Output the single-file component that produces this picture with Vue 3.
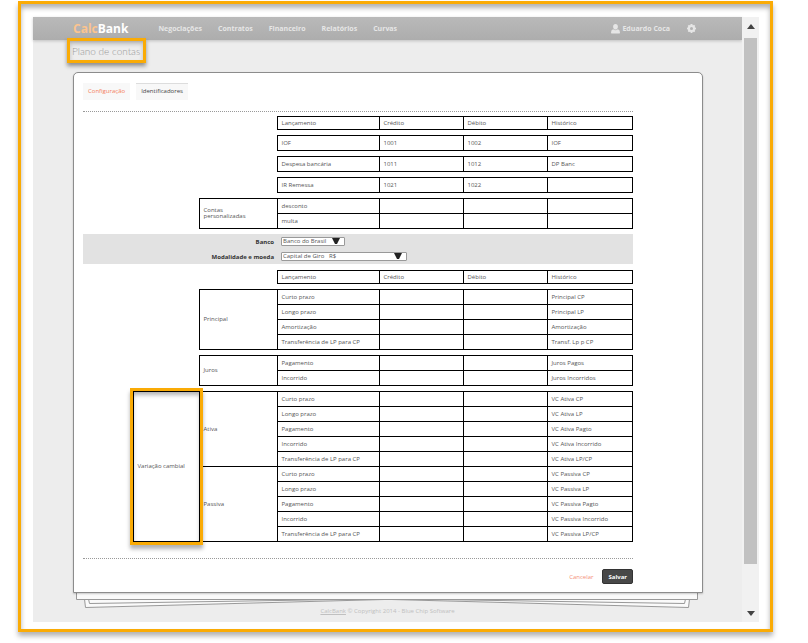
<script setup>
import { ref } from "vue";

const menu = ["Negociações", "Contratos", "Financeiro", "Relatórios", "Curvas"];

const header = {
  head: true,
  groups: [{ rows: [["Lançamento", "Crédito", "Débito", "Histórico"]] }],
};

const single = (...cells) => ({ groups: [{ rows: [cells] }] });

// lançamentos gerais
const generalBlocks = [
  header,
  single("IOF", "1001", "1002", "IOF"),
  single("Despesa bancária", "1011", "1012", "DP Banc"),
  single("IR Remessa", "1021", "1022", ""),
  {
    groups: [
      {
        name: "Contas personalizadas",
        rows: [
          ["desconto", "", "", ""],
          ["multa", "", "", ""],
        ],
      },
    ],
  },
];

// lançamentos por banco e modalidade
const bankBlocks = [
  header,
  {
    groups: [
      {
        name: "Principal",
        rows: [
          ["Curto prazo", "", "", "Principal CP"],
          ["Longo prazo", "", "", "Principal LP"],
          ["Amortização", "", "", "Amortização"],
          ["Transferência de LP para CP", "", "", "Transf. Lp p CP"],
        ],
      },
    ],
  },
  {
    groups: [
      {
        name: "Juros",
        rows: [
          ["Pagamento", "", "", "Juros Pagos"],
          ["Incorrido", "", "", "Juros Incorridos"],
        ],
      },
    ],
  },
  {
    outer: "Variação cambial",
    groups: ["Ativa", "Passiva"].map((name) => ({
      name,
      rows: [
        ["Curto prazo", "", "", `VC ${name} CP`],
        ["Longo prazo", "", "", `VC ${name} LP`],
        ["Pagamento", "", "", `VC ${name} Pagto`],
        ["Incorrido", "", "", `VC ${name} Incorrido`],
        ["Transferência de LP para CP", "", "", `VC ${name} LP/CP`],
      ],
    })),
  },
];

const sections = [
  { id: "geral", blocks: generalBlocks },
  { id: "banco", blocks: bankBlocks },
];

const banco = ref("Banco do Brasil");
const modalidade = ref("giro");

const countRows = (block) => block.groups.reduce((sum, g) => sum + g.rows.length, 0);
</script>

<template>
  <div class="frame">
    <div class="window">
      <div class="page">
        <header class="topbar">
          <a href="#" class="logo"><span>Calc</span>Bank</a>
          <nav class="menu">
            <a v-for="item in menu" :key="item" href="#">{{ item }}</a>
          </nav>
          <a href="#" class="user">
            <svg width="9" height="10" viewBox="0 0 9 10">
              <path d="M4.5 0C6 0 6.9 1.1 6.9 2.7C6.9 4.3 5.8 5.6 4.5 5.6C3.2 5.6 2.1 4.3 2.1 2.7C2.1 1.1 3 0 4.5 0ZM2.2 5.3Q4.5 7.4 6.8 5.3Q9 5.8 9 8.4Q9 9.6 7.8 9.6H1.2Q0 9.6 0 8.4Q0 5.8 2.2 5.3Z" />
            </svg>
            Eduardo Coca
          </a>
          <a href="#" class="settings" aria-label="Configurações">
            <svg width="9" height="9" viewBox="0 0 9 9">
              <g>
                <rect v-for="n in 4" :key="n" x="3.5" y="0" width="2" height="9" rx="0.4" :transform="`rotate(${n * 45} 4.5 4.5)`" />
              </g>
              <circle cx="4.5" cy="4.5" r="2.7" fill="none" stroke="#e6e6e6" stroke-width="1.8" />
              <circle cx="4.5" cy="4.5" r="1.5" class="hole" />
            </svg>
          </a>
        </header>

        <h1 class="title">Plano de contas</h1>

        <main class="sheet">
          <nav class="tabs">
            <a href="#">Configuração</a>
            <a href="#" class="active">Identificadores</a>
          </nav>

          <div class="accounts">
            <template v-for="section in sections" :key="section.id">
              <div v-if="section.id === 'banco'" class="filters">
                <div class="filter">
                  <label for="banco">Banco</label>
                  <div class="select short">
                    <select id="banco" v-model="banco">
                      <option>Banco do Brasil</option>
                    </select>
                    <svg width="8" height="7" viewBox="0 0 8 7"><path d="M0 0H8L5 6H3Z" /></svg>
                  </div>
                </div>
                <div class="filter">
                  <label for="modalidade">Modalidade e moeda</label>
                  <div class="select">
                    <select id="modalidade" v-model="modalidade">
                      <option value="giro">Capital de Giro &nbsp; R$</option>
                    </select>
                    <svg width="8" height="7" viewBox="0 0 8 7"><path d="M0 0H8L5 6H3Z" /></svg>
                  </div>
                </div>
              </div>

              <table v-for="(block, b) in section.blocks" :key="b" :class="{ head: block.head }">
                <colgroup>
                  <col class="c-space" />
                  <col class="c-outer" />
                  <col class="c-group" />
                  <col class="c-entry" />
                  <col class="c-value" />
                  <col class="c-value" />
                  <col />
                </colgroup>
                <tbody>
                  <template v-for="(group, g) in block.groups" :key="g">
                    <tr v-for="(row, r) in group.rows" :key="r">
                      <template v-if="g === 0 && r === 0">
                        <td class="blank" :rowspan="countRows(block)"></td>
                        <td :class="block.outer ? 'marked' : 'blank'" :rowspan="countRows(block)">
                          {{ block.outer }}
                        </td>
                      </template>
                      <td v-if="r === 0" :class="group.name ? 'group' : 'blank'" :rowspan="group.rows.length">
                        {{ group.name }}
                      </td>
                      <component :is="block.head ? 'th' : 'td'" v-for="(cell, c) in row" :key="c">{{ cell }}</component>
                    </tr>
                  </template>
                </tbody>
              </table>
            </template>
          </div>

          <div class="actions">
            <a href="#">Cancelar</a>
            <button type="button">Salvar</button>
          </div>
        </main>

        <!-- folhas empilhadas sob a principal -->
        <svg class="stack" viewBox="0 0 630 15" preserveAspectRatio="none">
          <path d="M11.5 6L12.5 14.5L330 6" />
          <path d="M616.5 6L615.5 14.5L300 6" />
          <path d="M15.5 6L16.5 10.5L300 6" />
          <path d="M612.5 6L611.5 10.5L330 6" />
          <path d="M3.5 -2V6.5H624.5V-2" />
        </svg>

        <footer class="footer"><a href="#">CalcBank</a> © Copyright 2014 - Blue Chip Software</footer>
      </div>

      <div class="scrollbar">
        <svg width="8" height="5" viewBox="0 0 8 5"><path d="M0 5L4 0L8 5Z" /></svg>
        <div class="thumb"></div>
        <svg width="8" height="5" viewBox="0 0 8 5"><path d="M0 0L4 5L8 0Z" /></svg>
      </div>
    </div>
  </div>
</template>

<style>
body {
  background: #fff;
}

#app {
  display: flow-root;
}
</style>

<style scoped>
.frame {
  margin: 1px 35px 11px 18px;
  padding: 13px 11px 7px 12px;
  border: 3px solid #faab05;
  box-shadow: 0 4px 5px rgba(0, 0, 0, 0.3), inset 0 4px 5px rgba(0, 0, 0, 0.3);
  font-family: "Open Sans", sans-serif;
  font-size: 6px;
  line-height: 8px;
  color: #555;
}

a {
  color: inherit;
  text-decoration: none;
}

.window {
  display: flex;
}

.page {
  flex: 1;
  background: #ededed;
}

.topbar {
  display: flex;
  align-items: center;
  height: 23px;
  padding: 0 46px 0 40px;
  background: linear-gradient(#b9b9b9, #adadad);
  box-shadow: 0 1px 3px rgba(0, 0, 0, 0.2);
  font-size: 7px;
  font-weight: bold;
  color: #e6e6e6;
}

.logo {
  font-size: 12px;
  color: #fff;
}

.logo span {
  color: #fcc48f;
}

.menu {
  display: flex;
  gap: 16px;
  margin-left: 30px;
}

.user {
  display: flex;
  align-items: center;
  gap: 2px;
  margin-left: auto;
}

.settings {
  display: flex;
  margin-left: 17px;
}

.topbar svg {
  fill: #e6e6e6;
}

.topbar .hole {
  fill: #b3b3b3;
}

.title {
  position: relative;
  box-sizing: border-box;
  width: max-content;
  height: 25px;
  margin: -2px 0 9px 34px;
  padding: 0 3px 0 2px;
  border: 3px solid #faab05;
  box-shadow: 0 3px 4px rgba(0, 0, 0, 0.4), inset 0 3px 4px rgba(0, 0, 0, 0.2);
  font-family: Lato, sans-serif;
  font-size: 10px;
  font-weight: 300;
  line-height: 20px;
  color: #999;
}

.sheet {
  position: relative;
  margin: 0 39px 0 40px;
  padding: 10px 69px 8px 9px;
  border: 1px solid #8c8c8c;
  border-radius: 5px 5px 0 0;
  background: #fff;
  box-shadow: 0 1px 2px rgba(0, 0, 0, 0.2);
}

.tabs {
  display: flex;
  gap: 6px;
  padding-bottom: 11px;
}

.tabs a {
  padding: 3px 5px 5px;
  border-top: 1px solid #f8f8f8;
  background: #f8f8f8;
  color: #f4805c;
}

.tabs .active {
  border-color: #ddd;
  color: #444;
}

.accounts {
  display: flex;
  flex-direction: column;
  gap: 5px;
  padding: 4px 0 16px;
  border-top: 1px dotted #999;
  border-bottom: 1px dotted #999;
}

table {
  width: 100%;
  table-layout: fixed;
  border-collapse: collapse;
}

.c-space {
  width: 50px;
}

.c-outer {
  width: 66px;
}

.c-group {
  width: 78px;
}

.c-entry {
  width: 102px;
}

.c-value {
  width: 84px;
}

td,
th {
  height: 13px;
  padding: 0 4px 1px;
  border: 1px solid #000;
  font-weight: normal;
  text-align: left;
  white-space: nowrap;
}

.head td,
.head th {
  height: 11px;
}

.blank {
  border-width: 0;
}

.group {
  padding-right: 16px;
  line-height: 6px;
  white-space: normal;
}

.marked {
  position: relative;
}

.marked::after {
  content: "";
  position: absolute;
  inset: -4px;
  border: 3px solid #faab05;
  box-shadow: 0 4px 4px rgba(0, 0, 0, 0.3), inset 0 4px 4px rgba(0, 0, 0, 0.3);
}

.filters {
  margin-bottom: 1px;
  background: #e2e2e2;
}

.filter {
  display: flex;
  align-items: center;
  gap: 7px;
  height: 15px;
}

.filter label {
  width: 191px;
  font-weight: bold;
  color: #333;
  text-align: right;
}

.select {
  position: relative;
  width: 126px;
}

.select.short {
  width: 64px;
}

.select select {
  display: block;
  width: 100%;
  height: 9px;
  padding: 0 1px;
  border: 1px solid #999;
  border-radius: 1px;
  background: #fff;
  font: inherit;
  line-height: 7px;
  color: #555;
  appearance: none;
}

.select svg {
  position: absolute;
  top: 1px;
  right: 5px;
  fill: #222;
  pointer-events: none;
}

.actions {
  display: flex;
  align-items: center;
  justify-content: flex-end;
  gap: 9px;
  padding-top: 10px;
}

.actions a {
  color: #f4917a;
}

.actions button {
  height: 15px;
  padding: 0 5px;
  border: 1px solid #333;
  border-radius: 2px;
  background: #484848;
  font: inherit;
  font-weight: bold;
  color: #fff;
}

.stack {
  display: block;
  width: calc(100% - 79px);
  height: 15px;
  margin-left: 40px;
  fill: #fafafa;
  stroke: #999;
  stroke-linejoin: round;
}

.footer {
  padding: 0 0 8px;
  text-align: center;
  line-height: 6px;
  color: #c0c0c0;
}

.footer a {
  text-decoration: underline;
}

.scrollbar {
  display: flex;
  flex-direction: column;
  align-items: center;
  width: 17px;
  padding: 7px 0 6px;
  box-sizing: border-box;
  background: #f1f1f1;
  fill: #444;
}

.thumb {
  flex: 1;
  width: 13px;
  margin: 9px 0 47px;
  background: #c1c1c1;
}
</style>
